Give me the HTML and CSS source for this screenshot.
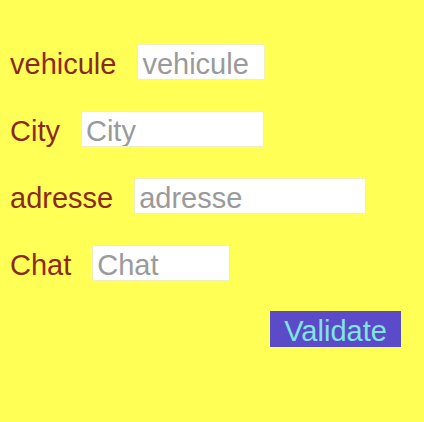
FILE: index.html
```html
<!DOCTYPE html>
<html>
<head>
<meta charset="utf-8">
<link rel="stylesheet" href="styles.css">
</head>
<body>
<form class="form">
  <div class="row"><label class="label">vehicule</label><input class="field w-vehicule" placeholder="vehicule"></div>
  <div class="row"><label class="label">City</label><input class="field w-city" placeholder="City"></div>
  <div class="row"><label class="label">adresse</label><input class="field w-adresse" placeholder="adresse"></div>
  <div class="row"><label class="label">Chat</label><input class="field w-chat" placeholder="Chat"></div>
  <button type="button" class="validate">Validate</button>
</form>
</body>
</html>
```
FILE: styles.css
```css
html, body {
  margin: 0;
  padding: 0;
  background: #ffff55;
  height: 100%;
}
.form {
  display: flex;
  flex-direction: column;
  gap: 31px;
  padding: 44px 23px 0 10px;
  font-family: "Liberation Sans", Arial, sans-serif;
}
.row {
  display: flex;
  align-items: baseline;
  gap: 21px;
}
.label {
  font-size: 29px;
  line-height: 30px;
  color: #8b2a1c;
}
.field {
  box-sizing: border-box;
  height: 36px;
  font-family: "Liberation Sans", Arial, sans-serif;
  font-size: 29px;
  line-height: 30px;
  padding: 5px 4px 0;
  border: 1px solid #eeeec0;
  border-radius: 2px;
  background: #ffffff;
  outline: none;
}
.field::placeholder {
  color: #9a9a9a;
}
.w-vehicule { width: 128px; }
.w-city { width: 183px; }
.w-adresse { width: 232px; }
.w-chat { width: 138px; }
.validate {
  align-self: flex-end;
  box-sizing: border-box;
  width: 131px;
  height: 36px;
  margin-top: -1px;
  background: #5b4bc9;
  color: #80e4e0;
  border: none;
  border-radius: 0;
  font-family: "Liberation Sans", Arial, sans-serif;
  font-size: 29px;
  padding: 4px 0 0;
}
```
